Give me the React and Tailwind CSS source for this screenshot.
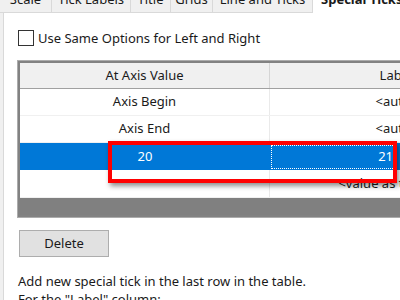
const tabs = [
  { label: "Scale", w: "w-[52px]" },
  { label: "Tick Labels", w: "w-[79px]" },
  { label: "Title", w: "w-[40px]" },
  { label: "Grids", w: "w-[42px]" },
  { label: "Line and Ticks", w: "w-[100px]" },
];

const rows = [
  { at: "Axis Begin", label: "<auto>" },
  { at: "Axis End", label: "<auto>" },
];

export default function App() {
  return (
    <div
      className="relative w-[400px] h-[300px] overflow-hidden bg-[#f0f0f0] text-[13px] text-[#1a1a1a]"
      style={{ fontFamily: "'Noto Sans', 'Open Sans', sans-serif" }}
    >
      {/* tab strip */}
      <div className="flex h-[13px]">
        {tabs.map((t) => (
          <div
            key={t.label}
            className={`${t.w} shrink-0 flex justify-center border-r border-b border-[#d9d9d9] bg-[#f0f0f0]`}
          >
            <span className="leading-[16px] mt-[-9px] whitespace-nowrap">{t.label}</span>
          </div>
        ))}
        <div className="w-[100px] shrink-0 flex pl-[8px] bg-white">
          <span className="leading-[16px] mt-[-9px] font-bold whitespace-nowrap">Special Ticks</span>
        </div>
        <div className="flex-1 border-b border-[#d9d9d9]" />
      </div>

      {/* panel */}
      <div className="ml-[3px] h-[287px] border-l border-[#d9d9d9] bg-white pt-[17px]">
        <label className="flex items-center ml-[14px] gap-[4px]">
          <span className="w-[16px] h-[16px] border border-[#333] bg-white" />
          <span className="leading-[16px] whitespace-nowrap">Use Same Options for Left and Right</span>
        </label>

        {/* table */}
        <div className="mt-[14px] ml-[13px] w-[400px] border border-[#acacac]">
          <div className="border-2 border-[#828282]">
            <div className="flex h-[26px] bg-[#f0f0f0] border-b border-[#a0a0a0]">
              <div className="w-[250px] shrink-0 flex items-center justify-center border-r border-[#d5d5d5]">
                At Axis Value
              </div>
              <div className="w-[240px] shrink-0 flex items-center justify-center pl-[12px]">Label</div>
            </div>
            {rows.map((r) => (
              <div key={r.at} className="flex h-[27px] border-b border-[#f0f0f0]">
                <div className="w-[250px] shrink-0 flex items-center justify-center border-r border-[#eaeaea]">
                  {r.at}
                </div>
                <div className="w-[240px] shrink-0 flex items-center justify-center pl-[14px]">{r.label}</div>
              </div>
            ))}
            <div className="flex h-[27px] bg-[#0078d7] text-white">
              <div className="w-[250px] shrink-0 flex items-center justify-center">20</div>
              <div className="w-[240px] shrink-0 flex items-center">
                <div className="w-[124px] h-[24px] ml-[1px] border border-dotted border-white flex items-center justify-end pr-[1px]">
                  21
                </div>
              </div>
            </div>
            <div className="flex h-[28px] border-b border-[#f0f0f0]">
              <div className="w-[250px] shrink-0 border-r border-[#eaeaea]" />
              <div className="w-[240px] shrink-0 flex items-center justify-center pr-[12px]">
                &lt;value as text&gt;
              </div>
            </div>
            <div className="h-[17px] bg-[#808080]" />
          </div>
        </div>

        <button className="mt-[12px] ml-[15px] w-[90px] h-[27px] bg-[#e1e1e1] border border-[#adadad] flex items-center justify-center">
          Delete
        </button>

        <div className="mt-[15px] ml-[14px] leading-[18px]">
          <p>Add new special tick in the last row in the table.</p>
          <p>For the "Label" column:</p>
        </div>
      </div>

      {/* highlight overlay */}
      <div className="absolute left-[108px] top-[141px] w-[289px] h-[42px] border-4 border-[#ff0000] shadow-[2px_3px_5px_rgba(0,0,0,0.45)]" />
    </div>
  );
}
